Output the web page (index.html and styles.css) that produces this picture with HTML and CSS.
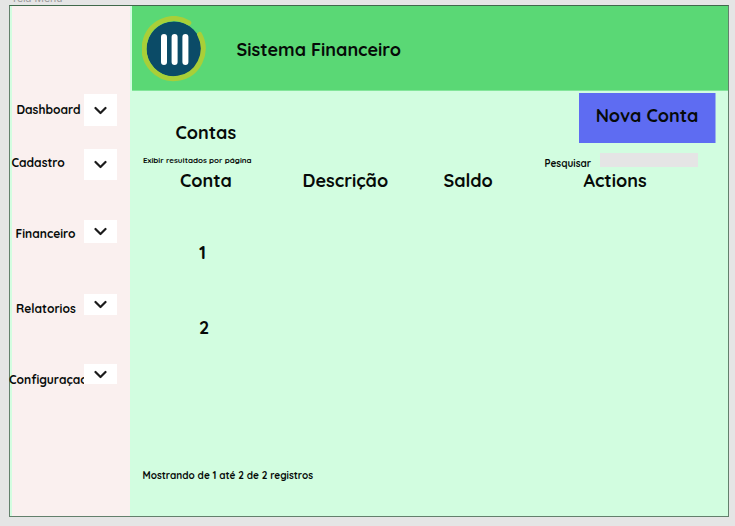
FILE: index.html
```html
<!DOCTYPE html>
<html lang="pt-BR">
<head>
<meta charset="utf-8">
<title>Sistema Financeiro</title>
<link rel="stylesheet" href="styles.css">
</head>
<body>
<div class="caption"><span>Tela Menu</span></div>
<div class="frame">
  <nav class="sidebar">
    <div class="item dashboard"><span class="label">Dashboard</span><button class="toggle"><svg viewBox="0 0 13 9"><path d="M1.500 2l5 5L11.500 2"/></svg></button></div>
    <div class="item cadastro"><span class="label">Cadastro</span><button class="toggle"><svg viewBox="0 0 13 9"><path d="M1.500 2l5 5L11.500 2"/></svg></button></div>
    <div class="item financeiro"><span class="label">Financeiro</span><button class="toggle"><svg viewBox="0 0 13 9"><path d="M1.500 2l5 5L11.500 2"/></svg></button></div>
    <div class="item relatorios"><span class="label">Relatorios</span><button class="toggle"><svg viewBox="0 0 13 9"><path d="M1.500 2l5 5L11.500 2"/></svg></button></div>
    <div class="item config"><span class="label">Configuraçao</span><button class="toggle"><svg viewBox="0 0 13 9"><path d="M1.500 2l5 5L11.500 2"/></svg></button></div>
  </nav>
  <main class="main">
    <header class="header">
      <svg class="logo" viewBox="0 0 64 66">
        <circle cx="32" cy="33" r="27.500" fill="#0b4b67"/>
        <path d="M46.800 6.900A29.500 30 0 1 0 57.600 18.400" fill="none" stroke="#a9cf38" stroke-width="5" stroke-linecap="round"/>
        <path d="M22 21v25M32.600 21v25M43.400 21v25" stroke="#fff" stroke-width="6" stroke-linecap="round"/>
      </svg>
      <h1 class="title"><span>Sistema Financeiro</span></h1>
    </header>
    <div class="toolbar">
      <h2 class="heading"><span>Contas</span></h2>
      <button class="new"><span>Nova Conta</span></button>
    </div>
    <div class="filters">
      <span class="perpage">Exibir resultados por página</span>
      <label class="search"><span>Pesquisar</span><input type="text"></label>
    </div>
    <div class="row head">
      <span class="c1">Conta</span><span class="c2">Descrição</span><span class="c3">Saldo</span><span class="c4">Actions</span>
    </div>
    <div class="row one"><span>1</span></div>
    <div class="row two"><span>2</span></div>
    <footer class="summary"><span>Mostrando de 1 até 2 de 2 registros</span></footer>
  </main>
</div>
</body>
</html>
```
FILE: styles.css
```css
* { box-sizing: border-box; }
body {
  margin: 0;
  width: 735px;
  height: 526px;
  overflow: hidden;
  background: #e5e5e5;
  color: #060a08;
  font-family: Quicksand, Inter, sans-serif;
  font-weight: 700;
  white-space: nowrap;
}
h1, h2 { margin: 0; font: inherit; }
button { border: 0; padding: 0; font: inherit; color: inherit; }
.caption {
  display: flex;
  align-items: flex-end;
  height: 5px;
  padding-left: 11px;
  overflow: hidden;
  color: #999;
  font: 400 10.5px/13px Inter, sans-serif;
}
.frame {
  display: flex;
  width: 720px;
  height: 512px;
  margin-left: 9px;
  border: 1px solid #63806c;
  border-top-color: #40694b;
  background: #d2fde0;
}
.sidebar {
  flex: none;
  width: 118px;
  margin-left: 2px;
  padding-top: 88px;
  background: #faf0ef;
}
.item { display: flex; width: 105px; height: 21px; }
.label { width: 72px; font-size: 12px; line-height: 16px; }
.toggle {
  display: flex;
  position: relative;
  align-items: center;
  justify-content: center;
  flex: none;
  width: 33px;
  height: 100%;
  background: #fff;
}
.toggle svg { width: 13px; height: 9px; fill: none; stroke: #1b1b1b; stroke-width: 2.2; stroke-linecap: round; stroke-linejoin: round; }
.dashboard { height: 32px; }
.dashboard .label { margin: 8px -4.5px 0 4.5px; }
.cadastro { height: 31px; margin-top: 23px; }
.cadastro .label { margin: 6px .5px 0 -.5px; }
.financeiro { height: 23px; margin-top: 40px; }
.financeiro .label { margin: 6px -3.500px 0 3.500px; }
.relatorios { margin-top: 51px; }
.relatorios .label { margin: 7px -4px 0 4px; }
.config { height: 20px; margin-top: 49px; }
.config .label { margin: 8px 3px 0 -3px; }
.main { flex: 1; margin-left: 2.4px; }
.header {
  display: flex;
  height: 85px;
  padding: 10px 0 0 10px;
  background: #5ad875;
  border-bottom: 1px solid #83e59a;
}
.logo { width: 64px; height: 66px; }
.title { margin: 22px 0 0 30.1px; font-size: 18px; line-height: 24px; }
.toolbar { display: flex; justify-content: space-between; height: 52px; padding: 2px 12px 0 43.1px; font-size: 18px; line-height: 24px; }
.heading { padding-top: 28px; }
.new { width: 137px; height: 50px; padding-bottom: 4px; background: #5e6cf2; border-right: 1px solid #98b3ea; }
.filters { display: flex; justify-content: space-between; height: 25px; padding: 10px 30px 0 10.6px; }
.perpage { padding-top: 1px; font-size: 8px; line-height: 12px; }
.search { display: flex; font-size: 10px; }
.search span { width: 55.5px; padding-top: 5px; line-height: 12px; }
.search input { width: 98px; height: 14px; padding: 0; border: 0; background: #e5e5e5; }
.row { height: 24px; font-size: 18px; line-height: 24px; }
.head { display: grid; grid-template-columns: 122.5px 141px 140px 1fr; padding: 1px 0 0 47.6px; }
.one { margin-top: 49px; padding-left: 66.6px; }
.two { margin-top: 51px; padding-left: 66.6px; }
.summary { margin-top: 129px; padding-left: 10.1px; font-size: 10px; line-height: 14px; }
```
